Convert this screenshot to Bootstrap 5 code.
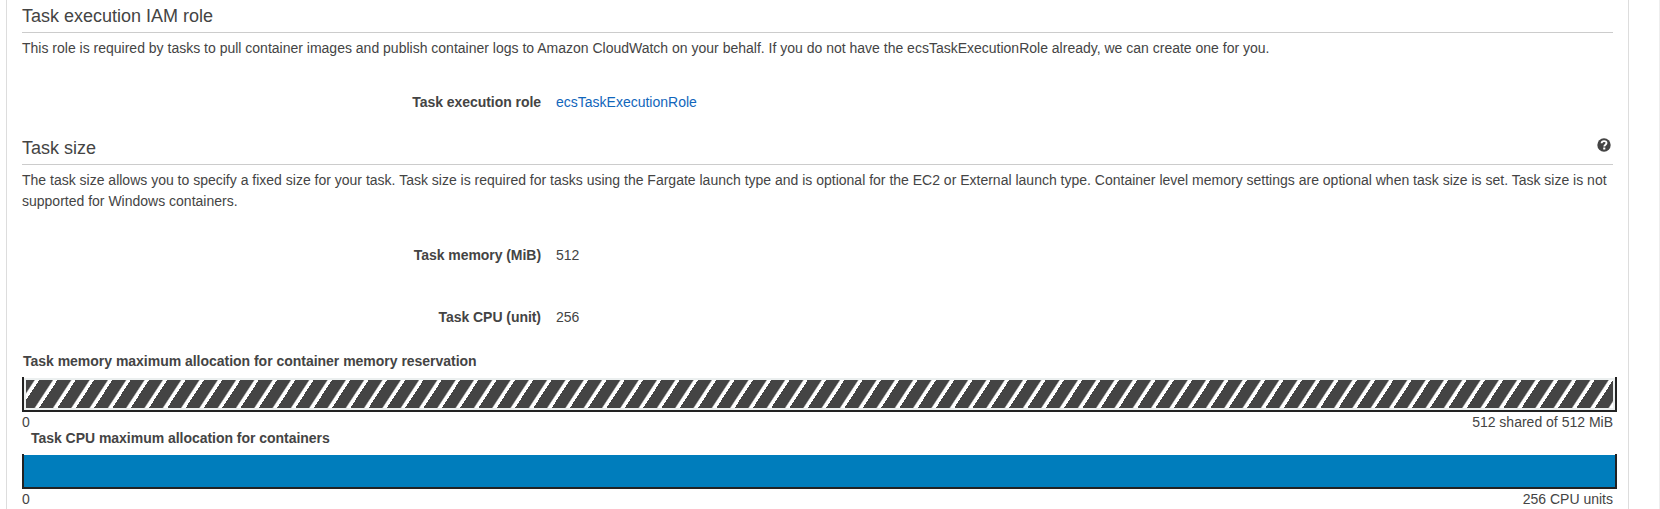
<!DOCTYPE html>
<html lang="en">
<head>
<meta charset="utf-8">
<title>Task definition</title>
<link href="https://cdn.jsdelivr.net/npm/bootstrap@5.3.0/dist/css/bootstrap.min.css" rel="stylesheet">
<style>
body{font-family:"Liberation Sans",Arial,sans-serif;font-size:14px;line-height:21px;color:#444;background:#fff;height:509px;overflow:hidden}
.page-frame{height:509px;padding-left:6px;padding-right:30px;border-right:1px solid #eee}
.panel{height:509px;border:solid #ddd;border-width:0 1px;padding:0 15px}
.section-title{font-size:18px;line-height:24px;font-weight:400;margin:0;border-bottom:1px solid #ccc;height:33px;padding-top:4px}
.size-title{margin-top:19px}
.help-icon{margin:2px 2px 0 0}
.intro{padding-top:5px;margin-bottom:33px}
.field{height:21px}
.field dt{width:519px;text-align:right;margin-right:15px;letter-spacing:-.05px}
.field a{color:#1166bb}
.cpu-field{margin-top:41px}
.meter-title{letter-spacing:-.02px;margin:23px 0 5px 1px}
.cpu-title{margin:-5px 0 5px 9px;letter-spacing:-.03px}
.meter{height:35px;border:solid #222;border-width:0 2px 2px;margin-right:-4px}
.mem{padding:3px 2px 2px;background:linear-gradient(#fff 1px,#ebefef 1px)}
.mem div{height:28px;background:repeating-linear-gradient(123.2deg,#444 0,#444 6.6px,#fff 8px,#fff 11px,#444 11px,#444 15.314px)}
.cpu{padding-top:1px}
.cpu div{height:32px;background:#007dbc}
</style>
</head>
<body>
<main class="page-frame">
<div class="panel">
<section>
<h2 class="section-title">Task execution IAM role</h2>
<p class="intro">This role is required by tasks to pull container images and publish container logs to Amazon CloudWatch on your behalf. If you do not have the ecsTaskExecutionRole already, we can create one for you.</p>
<dl class="field d-flex mb-0"><dt>Task execution role</dt><dd class="mb-0"><a href="#" class="text-decoration-none">ecsTaskExecutionRole</a></dd></dl>
</section>
<section>
<h2 class="section-title size-title d-flex justify-content-between"><span>Task size</span>
<svg class="help-icon" width="14" height="14" viewBox="0 0 14 14"><circle cx="7" cy="7" r="6.7" fill="#444"/><path d="M4.6 5.3C4.7 2.5 9.5 2.4 9.5 5.1C9.5 6.7 7.3 6.7 7.3 8.6" fill="none" stroke="#fff" stroke-width="1.9"/><rect x="6.2" y="9.5" width="2.1" height="2" fill="#fff"/></svg></h2>
<p class="intro">The task size allows you to specify a fixed size for your task. Task size is required for tasks using the Fargate launch type and is optional for the EC2 or External launch type. Container level memory settings are optional when task size is set. Task size is not supported for Windows containers.</p>
<dl class="field d-flex mb-0"><dt>Task memory (MiB)</dt><dd class="mb-0">512</dd></dl>
<dl class="field cpu-field d-flex mb-0"><dt>Task CPU (unit)</dt><dd class="mb-0">256</dd></dl>
<div class="meter-title fw-bold">Task memory maximum allocation for container memory reservation</div>
<div class="meter mem"><div></div></div>
<div class="d-flex justify-content-between"><span>0</span><span>512 shared of 512 MiB</span></div>
<div class="meter-title cpu-title fw-bold">Task CPU maximum allocation for containers</div>
<div class="meter cpu"><div></div></div>
<div class="d-flex justify-content-between"><span>0</span><span>256 CPU units</span></div>
</section>
</div>
</main>
<script src="https://cdn.jsdelivr.net/npm/bootstrap@5.3.0/dist/js/bootstrap.bundle.min.js"></script>
</body>
</html>
